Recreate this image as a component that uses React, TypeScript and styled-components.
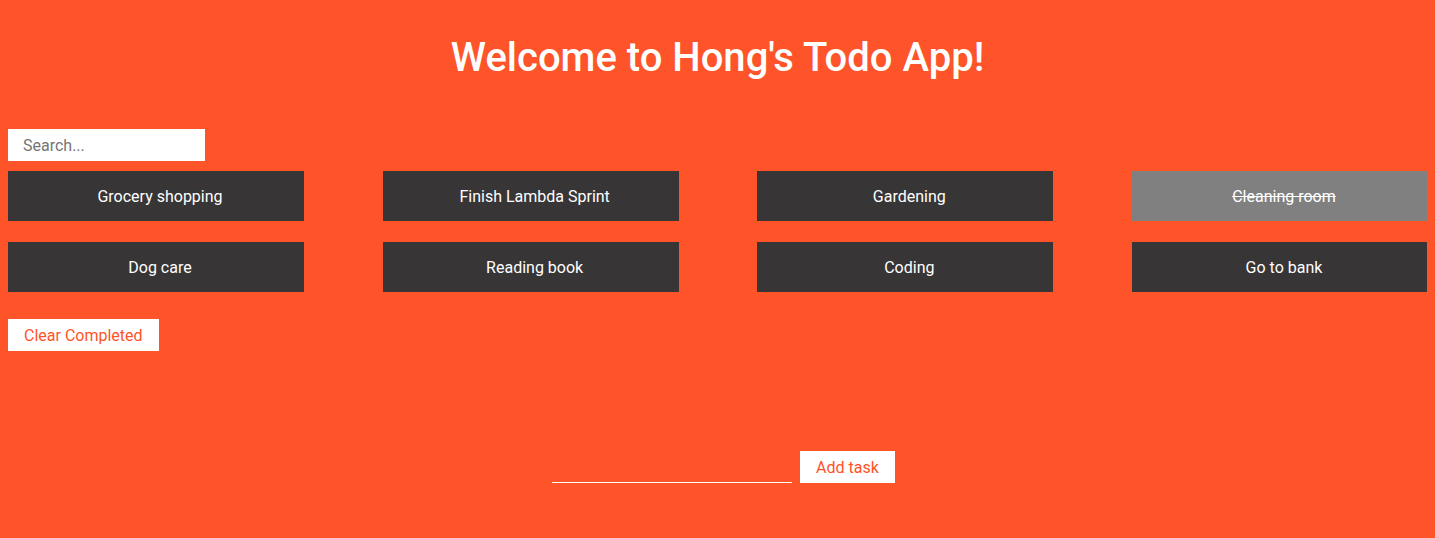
import React from "react";
import styled, { createGlobalStyle } from "styled-components";

const todos = [
    { id: 1, task: "Grocery shopping", completed: false },
    { id: 2, task: "Finish Lambda Sprint", completed: false },
    { id: 3, task: "Gardening", completed: false },
    { id: 4, task: "Cleaning room", completed: true },
    { id: 5, task: "Dog care", completed: false },
    { id: 6, task: "Reading book", completed: false },
    { id: 7, task: "Coding", completed: false },
    { id: 8, task: "Go to bank", completed: false },
];

const App = () => {
    return <Page>
        <GlobalStyle/>
        <Title>Welcome to Hong's Todo App!</Title>
        <SearchInput placeholder="Search..." />
        <TodoGrid>
            {todos.map(t =>
                <TodoCard key={t.id} completed={t.completed}>{t.task}</TodoCard>
            )}
        </TodoGrid>
        <WhiteButton>Clear Completed</WhiteButton>
        <AddForm onSubmit={e => e.preventDefault()}>
            <TaskInput />
            <WhiteButton>Add task</WhiteButton>
        </AddForm>
    </Page>
}
export default App


const GlobalStyle = createGlobalStyle`
  html, body { background: #ff5329; }
  body { margin: 8px; font-family: Roboto, "Liberation Sans", sans-serif; }
`
const Page = styled.div`
  display: flex; flex-direction: column;
  min-height: 522px;
`
const Title = styled.h1`
  margin: 26px 0 48px;
  text-align: center;
  font: 500 40px/47px Roboto, sans-serif;
  color: #ffffff;
`
const SearchInput = styled.input`
  box-sizing: border-box;
  width: 197px; height: 32px;
  padding: 0 15px;
  border: none; outline: none;
  font: 400 16px Roboto, sans-serif;
  color: #333;
  &::placeholder { color: #757575; }
`
const TodoGrid = styled.div`
  display: flex; flex-wrap: wrap;
  justify-content: space-between;
  row-gap: 21px;
  margin: 10px -1px 27px 0;
`
const TodoCard = styled.div<{ completed: boolean }>`
  box-sizing: border-box;
  width: 296px; height: 50px;
  padding-left: 8px;
  display: flex; align-items: center; justify-content: center;
  background: ${p => p.completed ? '#808080' : '#383536'};
  color: #ffffff;
  font: 400 16px Roboto, sans-serif;
  text-decoration: ${p => p.completed ? 'line-through' : 'none'};
`
const WhiteButton = styled.button`
  align-self: flex-start;
  height: 32px;
  padding: 0 16px;
  background: #ffffff;
  border: none;
  color: #ff5329;
  font: 400 16px Roboto, sans-serif;
  cursor: pointer;
`
const AddForm = styled.form`
  display: flex; justify-content: center; align-items: flex-end;
  gap: 8px;
  margin: 100px 0 0 12px;
`
const TaskInput = styled.input`
  box-sizing: border-box;
  width: 240px; height: 32px;
  background: transparent;
  border: none; border-bottom: 1px solid #ffffff;
  outline: none;
  color: #ffffff;
  font: 400 16px Roboto, sans-serif;
`
